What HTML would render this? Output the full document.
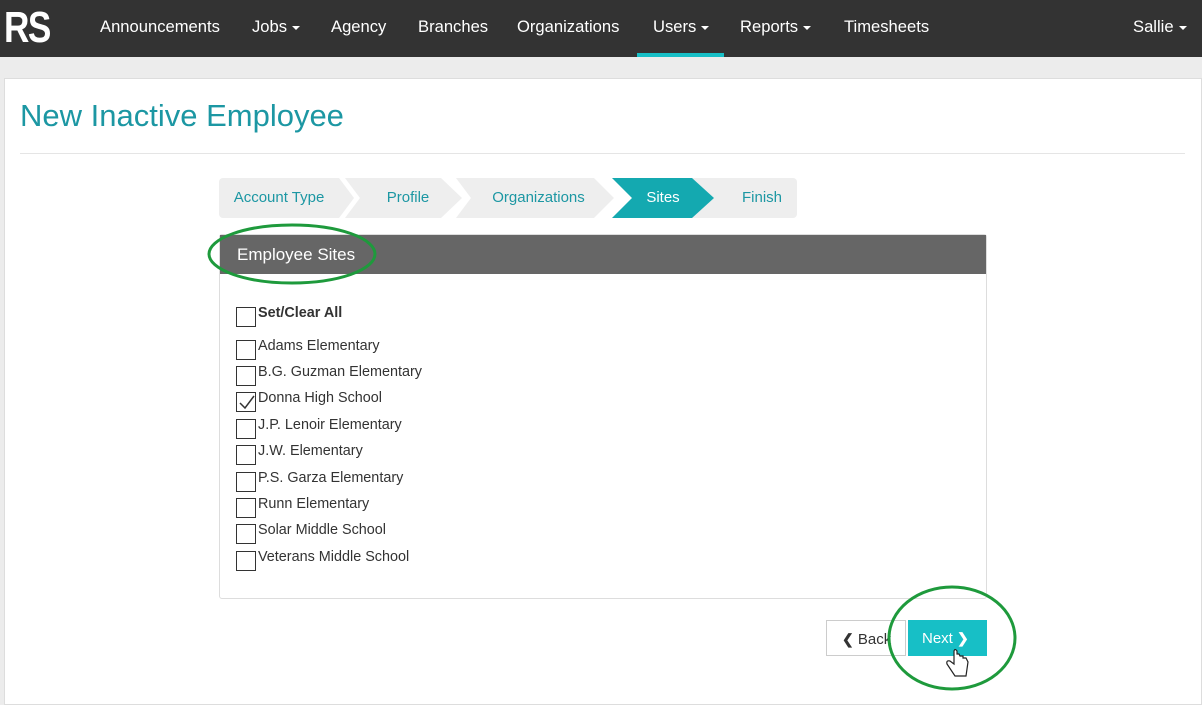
<!DOCTYPE html>
<html><head><style>
*{margin:0;padding:0;box-sizing:border-box}
body{width:1202px;height:705px;overflow:hidden;background:#ececec;font-family:"Liberation Sans",sans-serif;position:relative}
.nav{position:absolute;left:0;top:0;width:1202px;height:57px;background:#333}
.nav span{position:absolute;top:17px;color:#fff;font-size:16.6px}
.logo{position:absolute;left:4px;top:4px;color:#fff;font:bold 44px/48px "Liberation Sans Narrow","Liberation Sans",sans-serif;letter-spacing:-2px;transform:scaleX(.8);transform-origin:left}
.caret{display:inline-block;border-left:4px solid transparent;border-right:4px solid transparent;border-top:4px solid #fff;vertical-align:middle;margin-left:5px}
.main{position:absolute;left:4px;top:78px;width:1198px;height:627px;background:#fff;border:1px solid #ddd}
h1{position:absolute;left:20px;top:98px;font-weight:normal;font-size:31px;color:#1c97a3}
.hr{position:absolute;left:20px;top:153px;width:1165px;border-top:1px solid #e5e5e5}
.wiz{position:absolute;top:178px;height:40px;background:#eee;color:#1c97a3;font-size:15px;line-height:40px;text-align:center}
.panel{position:absolute;left:219px;top:234px;width:768px;height:365px;border:1px solid #ddd;border-radius:3px}
.ph{height:39px;background:#666;color:#fff;font-size:17px;line-height:40px;padding-left:17px}
.row{position:absolute;left:16px;font-size:14.4px;color:#333}
.cb{position:absolute;left:0;top:3px;width:20px;height:20px;border:1px solid #333;background:#fff}
.row span{position:absolute;left:22px;top:1px;white-space:nowrap}
.btn{position:absolute;top:620px;height:36px;font-size:15px;line-height:36px}
</style></head><body>
<div class="nav">
<div class="logo">RS</div>
<span style="left:100px">Announcements</span>
<span style="left:252px">Jobs<i class="caret"></i></span>
<span style="left:331px">Agency</span>
<span style="left:418px">Branches</span>
<span style="left:517px">Organizations</span>
<span style="left:653px">Users<i class="caret"></i></span>
<span style="left:740px">Reports<i class="caret"></i></span>
<span style="left:844px">Timesheets</span>
<span style="left:1133px">Sallie<i class="caret"></i></span>
<div style="position:absolute;left:637px;top:53px;width:87px;height:4px;background:#17bfc6"></div>
</div>
<div class="main"></div>
<h1>New Inactive Employee</h1>
<div class="hr"></div>
<div class="wiz" style="left:219px;width:578px;border-radius:4px;background:#eee"></div>
<svg style="position:absolute;left:219px;top:178px" width="578" height="40">
<polygon points="120,0 135,20 120,40 126,40 141,20 126,0" fill="#fff"/>
<polygon points="222,0 243,20 222,40 237,40 252,20 237,0" fill="#fff"/>
<polygon points="375,0 395,20 375,40 393,40 413,20 393,0" fill="#fff"/>
<polygon points="393,0 473,0 495,20 473,40 393,40 413,20" fill="#14a9b0"/>
</svg>
<div class="wiz" style="left:219px;width:120px;background:none">Account Type</div>
<div class="wiz" style="left:356px;width:104px;background:none">Profile</div>
<div class="wiz" style="left:466px;width:145px;background:none">Organizations</div>
<div class="wiz" style="left:625px;width:76px;background:none;color:#fff">Sites</div>
<div class="wiz" style="left:722px;width:80px;background:none">Finish</div>
<div class="panel"><div class="ph">Employee Sites</div>
<div class="row" style="top:69px"><i class="cb"></i><span style="font-weight:bold">Set/Clear All</span></div>
<div class="row" style="top:102px"><i class="cb"></i><span>Adams Elementary</span></div>
<div class="row" style="top:128px"><i class="cb"></i><span>B.G. Guzman Elementary</span></div>
<div class="row" style="top:154px"><i class="cb"></i><span>Donna High School</span><svg style="position:absolute;left:2px;top:5px" width="17" height="17"><path d="M2 9 L7 14 L16 2" stroke="#333" stroke-width="1.5" fill="none"/></svg></div>
<div class="row" style="top:181px"><i class="cb"></i><span>J.P. Lenoir Elementary</span></div>
<div class="row" style="top:207px"><i class="cb"></i><span>J.W. Elementary</span></div>
<div class="row" style="top:234px"><i class="cb"></i><span>P.S. Garza Elementary</span></div>
<div class="row" style="top:260px"><i class="cb"></i><span>Runn Elementary</span></div>
<div class="row" style="top:286px"><i class="cb"></i><span>Solar Middle School</span></div>
<div class="row" style="top:313px"><i class="cb"></i><span>Veterans Middle School</span></div>
</div>
<div class="btn" style="left:826px;width:80px;border:1px solid #ccc;background:#fff;color:#333;padding-left:15px;overflow:hidden"><b style="font-size:14px">&#10094;</b> Back</div>
<div class="btn" style="left:908px;width:79px;background:#17bfc6;color:#fff;padding-left:14px">Next <b style="font-size:14px">&#10095;</b></div>
<svg style="position:absolute;left:0;top:0" width="1202" height="705">
<ellipse cx="292" cy="254" rx="83" ry="29" fill="none" stroke="#1e9a3c" stroke-width="3"/>
<ellipse cx="952" cy="638" rx="63" ry="51" fill="none" stroke="#1e9a3c" stroke-width="3"/>
<path d="M954 651 L954 664 L950 661 Q946 660 947 664 L955 676 L966 676 L968 662 L966 658 L963 658 L963 656 L960 656 L959 654 L957 654 L957 651 Q955 648 954 651Z" fill="#fff" stroke="#222" stroke-width="1.2"/>
</svg>
</body></html>
